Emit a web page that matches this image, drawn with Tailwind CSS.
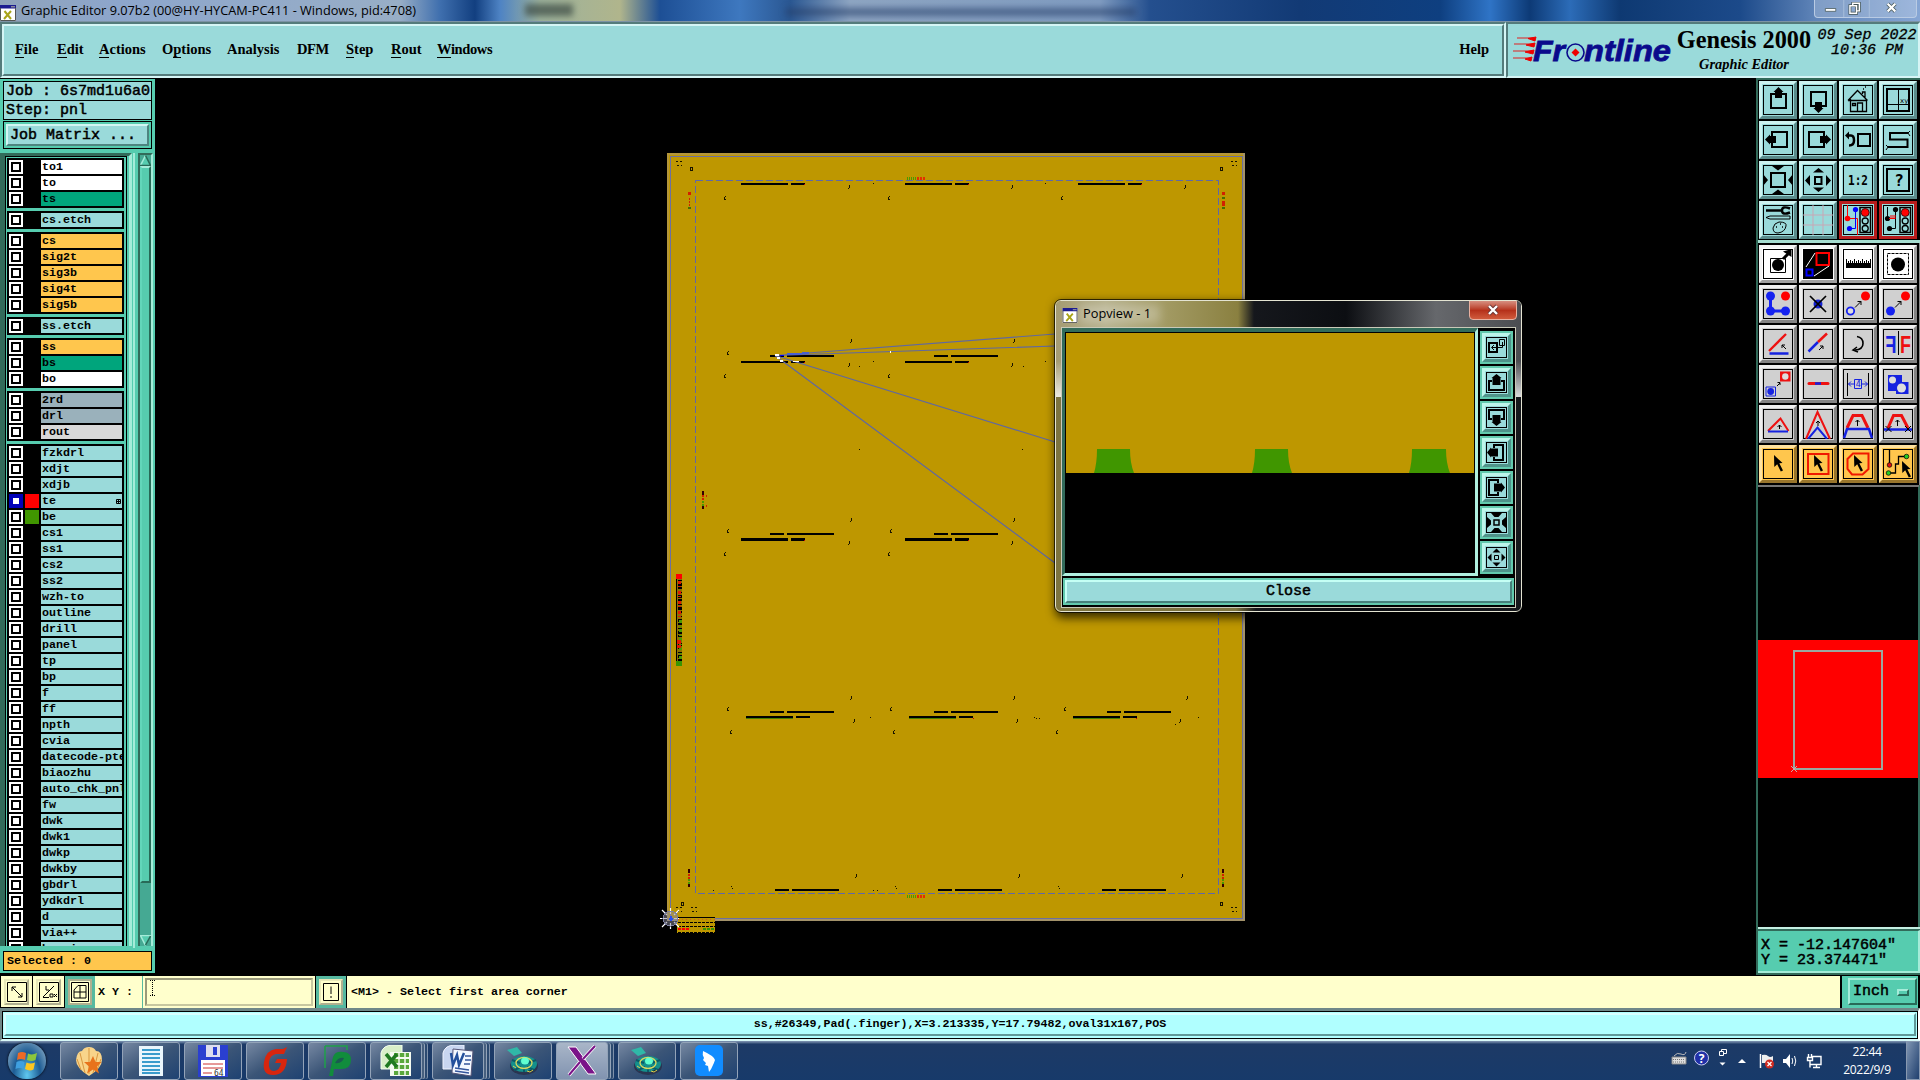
<!DOCTYPE html>
<html lang="en">
<head>
  <meta charset="UTF-8" />
  <meta name="viewport" content="width=device-width, initial-scale=1.0"/>
  <title>Graphic Editor 9.07b2</title>
  <script src="https://cdn.jsdelivr.net/npm/@tailwindcss/browser@4"></script>
</head>
<body class="bg-black w-[1920px] h-[1080px] overflow-hidden flex flex-col relative text-black font-['Liberation_Mono',monospace]">

  <!-- Shared icons, 30x30 -->
  <svg class="hidden">
    <defs>
      <symbol id="up" viewBox="0 0 30 30"><path d="M12 9H8v14h15V9h-4" fill="none" stroke="#000" stroke-width="2"/><path d="M15.500 2l5 5h-1.500v6h-7V7h-1.500z"/></symbol>
      <symbol id="down" viewBox="0 0 30 30"><path d="M12 21H8V7h15v14h-4" fill="none" stroke="#000" stroke-width="2"/><path d="M15.500 28l5-5h-1.500v-6h-7v6h-1.500z"/></symbol>
      <symbol id="left" viewBox="0 0 30 30"><path d="M9 11V7h15v15H9v-4" fill="none" stroke="#000" stroke-width="2"/><path d="M2 14.500l5-5v1.500h6v7H7v1.500z"/></symbol>
      <symbol id="right" viewBox="0 0 30 30"><path d="M21 11V7H6v15h15v-4" fill="none" stroke="#000" stroke-width="2"/><path d="M28 14.500l-5-5v1.500h-6v7h6v1.500z"/></symbol>
      <symbol id="home" viewBox="0 0 30 30"><path d="M5 15.500L14.500 5.500l10 10M7.500 14v12.500h16V14M5 15.500h19M9.500 18.500h3v2h-3zM14.500 26v-8h5v8M19.500 9V7h2.500v6M20 4h1M22 2h1" fill="none" stroke="#000" stroke-width="1.300"/></symbol>
      <symbol id="xy" viewBox="0 0 30 30"><path d="M4 4h22v22H4z" fill="none" stroke="#000" stroke-width="2"/><path d="M15.500 4v22M4 19.500h22" stroke="#000"/><text x="17" y="18" font-size="7" font-family="DejaVu Sans">xy</text></symbol>
      <symbol id="undo" viewBox="0 0 30 30"><path d="M15 9h12v12H15z" fill="none" stroke="#000" stroke-width="2"/><path d="M4 10.500h4q3 0 3 5t-5 5" fill="none" stroke="#000" stroke-width="2.500"/><path d="M2 10.500l4-4v8z"/></symbol>
      <symbol id="snake" viewBox="0 0 30 30"><path d="M25 8H7v6.500h17.500V22H5" fill="none" stroke="#000" stroke-width="2"/><path d="M25 8l2-2M25 8l2 3M5 22l-2-2M5 22l-2 3" stroke="#000"/></symbol>
      <symbol id="zin" viewBox="0 0 30 30"><path d="M8 8h14v14H8z" fill="none" stroke="#000" stroke-width="2"/><path d="M9 1h12l-6 4.500zM9 29h12l-6-4.500zM0 9v12l5-6zM30 9v12l-5-6z"/></symbol>
      <symbol id="zout" viewBox="0 0 30 30"><path d="M12 12h6.500v7H12z" fill="none" stroke="#000" stroke-width="2"/><path d="M15.500 3l5.500 4.500H10zM15.500 27l5.500-4.500H10zM2 15.500L7 10v11zM28 15.500L23 10v11z"/></symbol>
      <symbol id="ratio" viewBox="0 0 30 30"><text x="15" y="20" text-anchor="middle" font-size="14" font-weight="bold" font-family="DejaVu Sans Mono" textLength="20" lengthAdjust="spacingAndGlyphs">1:2</text></symbol>
      <symbol id="ask" viewBox="0 0 30 30"><path d="M4 4h22v22H4z" fill="none" stroke="#000" stroke-width="2"/><text x="16" y="21" text-anchor="middle" font-size="16" font-weight="bold" font-family="DejaVu Sans Mono">?</text></symbol>
      <symbol id="tools" viewBox="0 0 30 30"><path d="M3 5.500h15" stroke="#000" stroke-width="2.500"/><path d="M27 3.500q-8-3-8 2t8 2" fill="none" stroke="#000" stroke-width="2.500"/><path d="M3 12.500l4-1.500h20v3H7z" fill="none" stroke="#000"/><path d="M10 23q1-5 6-6 8 0 7 4-1 6-8 7-5 0-5-5z" fill="none" stroke="#000"/><path d="M13 22h1M17 19h1M19 22h1" stroke="#000" stroke-width="1.500"/></symbol>
      <symbol id="grid" viewBox="0 0 30 30"><path d="M10 0v30M20 0v30M0 10h30M0 20h30" stroke="#c9a6b4"/></symbol>
      <symbol id="lamp" viewBox="0 0 30 30"><path d="M17 2.500h10.500v25H17z" fill="none" stroke="#000" stroke-width="1.500"/><circle cx="22.200" cy="7.500" r="4" fill="#f00" stroke="#000" stroke-width=".7"/><circle cx="22.200" cy="16" r="3" fill="none" stroke="#000" stroke-width="1.300"/><circle cx="22.200" cy="23.500" r="3" fill="none" stroke="#000" stroke-width="1.300"/></symbol>
      <symbol id="netcol" viewBox="0 0 30 30"><path d="M4.500 0v13.500h10V30" fill="none" stroke="#f00"/><path d="M12.500 5v18.500h-6" fill="none" stroke="#00f"/><circle cx="12.500" cy="4.500" r="2.600" fill="#00f"/><circle cx="6.500" cy="23.500" r="2.600" fill="#00f"/><circle cx="4.500" cy="13.500" r="2.800" fill="#f00"/><use href="#lamp" width="30" height="30"/></symbol>
      <symbol id="netblk" viewBox="0 0 30 30"><path d="M4.500 2v11.500M12.500 5v18.500h-6" fill="none" stroke="#000"/><circle cx="12.500" cy="4.500" r="2.600"/><circle cx="6.500" cy="23.500" r="2.600"/><circle cx="4.500" cy="13.500" r="2.600"/><path d="M6 13.500h6M8 10v4M10 10v4M12 10v4" stroke="#f00"/><use href="#lamp" width="30" height="30"/></symbol>

      <symbol id="move" viewBox="0 0 30 30"><path d="M7.500 9.500h15v14h-15z" fill="none" stroke="#000"/><circle cx="15" cy="16" r="6"/><path d="M20 10l5-5" stroke="#000" stroke-width="3"/><path d="M20 2.500L28.500 0v8z"/></symbol>
      <symbol id="pop" viewBox="0 0 30 30"><path d="M0 0h30v30H0z"/><path d="M13.500 4h12.500v12H13.500z" fill="none" stroke="#f00" stroke-width="2"/><path d="M3.500 20.500h6v6h-6z" fill="none" stroke="#00f" stroke-width="2"/><path d="M3 18l9-14M11 27l15-10" stroke="#fff"/></symbol>
      <symbol id="ruler" viewBox="0 0 30 30"><path d="M3 14h25v5H3z"/><path d="M3.500 10v5M5.500 12v3M7.500 11v4M9.500 12v3M11.500 10v5M13.500 12v3M15.500 11v4M17.500 12v3M19.500 10v5M21.500 12v3M23.500 11v4M25.500 12v3M27.500 10v5" stroke="#000"/></symbol>
      <symbol id="pick" viewBox="0 0 30 30"><path d="M4.500 4.500h21v21h-21z" fill="none" stroke="#000" stroke-dasharray="3 1"/><circle cx="15" cy="15.500" r="7"/></symbol>
      <symbol id="chain" viewBox="0 0 30 30"><path d="M7.500 7v15h15" fill="none" stroke="#1522f0" stroke-width="3"/><g fill="#1522f0"><circle cx="7.500" cy="7" r="4.500"/><circle cx="7.500" cy="22" r="4.500"/><circle cx="22.500" cy="22" r="4.500"/></g><circle cx="22.500" cy="7" r="4.500" fill="#f00"/></symbol>
      <symbol id="del" viewBox="0 0 30 30"><circle cx="15" cy="15" r="4.500" fill="#1522d0"/><path d="M7 7l16 16M23 7L7 23" stroke="#000" stroke-width="1.700"/></symbol>
      <symbol id="arr" viewBox="0 0 30 30"><path d="M12 18.500l6-6M14.500 12.500H18V16" fill="none" stroke="#000"/></symbol>
      <symbol id="cphollow" viewBox="0 0 30 30"><circle cx="7.500" cy="22" r="3.700" fill="#ddd" stroke="#1522f0" stroke-width="1.800"/><circle cx="22.500" cy="7" r="4.500" fill="#f00"/><use href="#arr" width="30" height="30"/></symbol>
      <symbol id="cpsolid" viewBox="0 0 30 30"><circle cx="7.500" cy="22" r="4.500" fill="#1522f0"/><circle cx="22.500" cy="7" r="4.500" fill="#f00"/><use href="#arr" width="30" height="30"/></symbol>
      <symbol id="angle" viewBox="0 0 30 30"><path d="M6 22L23 5" stroke="#e11" stroke-width="2.300"/><path d="M6.500 24.500h19" stroke="#1522e0" stroke-width="2.500"/><path d="M23 20l-4-4M19 19v-3h3" fill="none" stroke="#000"/></symbol>
      <symbol id="split" viewBox="0 0 30 30"><path d="M5.500 22.500L15 13" stroke="#1522e0" stroke-width="2.500"/><path d="M15 13l9-8.500" stroke="#e11" stroke-width="2.500"/><path d="M16 21l4-4M17 17h3v3" fill="none" stroke="#000"/></symbol>
      <symbol id="rot" viewBox="0 0 30 30"><path d="M14 7.500q6 1 6 7t-8 6.500" fill="none" stroke="#000" stroke-width="1.600"/><path d="M14 18l-4 3 5 2" fill="none" stroke="#000" stroke-width="1.500"/></symbol>
      <symbol id="mirror" viewBox="0 0 30 30"><path d="M15.500 2v24" stroke="#000"/><text x="17" y="24" font-size="23" textLength="11" lengthAdjust="spacingAndGlyphs" font-family="Liberation Sans" font-weight="bold" fill="#e11">F</text><text x="-13.500" y="24" font-size="23" textLength="11" lengthAdjust="spacingAndGlyphs" font-family="Liberation Sans" transform="scale(-1 1)" font-weight="bold" fill="#1522e0">F</text></symbol>
      <symbol id="swap" viewBox="0 0 30 30"><path d="M17 2.500h10.500v10H17z" fill="#e11"/><circle cx="22.300" cy="7.500" r="3.200" fill="#ddd"/><path d="M3 18h9.500v9H3z" fill="none" stroke="#1522e0"/><circle cx="7.700" cy="22.500" r="3.400" fill="#1522e0"/><path d="M14 17l3-3M14.500 13.500H17V16" fill="none" stroke="#000"/></symbol>
      <symbol id="seg" viewBox="0 0 30 30"><path d="M6 14.500h19" stroke="#e11" stroke-width="3" stroke-linecap="round"/><path d="M12 14.500h6" stroke="#1522e0" stroke-width="2.500"/></symbol>
      <symbol id="gap4" viewBox="0 0 30 30"><path d="M4.500 4v23M25.500 4v23" stroke="#000"/><path d="M11.500 10.500h7v9h-7zM5.500 15h6M8 12.500L5.500 15 8 17.500M18.500 15h6M22 12.500l2.500 2.500-2.500 2.500" fill="none" stroke="#1522e0"/><text x="12.800" y="18" font-size="8" font-family="DejaVu Sans" fill="#1522e0">4</text></symbol>
      <symbol id="bool" viewBox="0 0 30 30"><path d="M5 6h14v7h6.500v12H13v-3H5z" fill="#1522e0"/><circle cx="9.500" cy="11" r="3.500" fill="#ddd"/><circle cx="18.500" cy="19" r="4.500" fill="#ddd"/></symbol>
      <symbol id="tri" viewBox="0 0 30 30"><path d="M5 22L17.500 9.500l8 12.500" fill="none" stroke="#e11" stroke-width="2"/><path d="M5 22.500h20" stroke="#1522e0" stroke-width="2"/><path d="M16.500 20v-4M14.500 18l2-2 2 2" fill="none" stroke="#000"/></symbol>
      <symbol id="peak" viewBox="0 0 30 30"><path d="M3 30L14.500 3 27 30" fill="none" stroke="#e11" stroke-width="2"/><path d="M5 30l9.500-11.500L24 30" fill="none" stroke="#1522e0" stroke-width="2"/><path d="M15 17v-5M13 14l2-2 2 2" fill="none" stroke="#000"/></symbol>
      <symbol id="trap" viewBox="0 0 30 30"><path d="M4 19l6-12.500h9L25 19" fill="none" stroke="#e11" stroke-width="3"/><path d="M1 29l3-9h22l3 9" fill="none" stroke="#1522e0" stroke-width="2.500"/><path d="M14.500 17v-6M12.500 13l2-2 2 2" fill="none" stroke="#000"/></symbol>
      <symbol id="trapx" viewBox="0 0 30 30"><path d="M5 19l5.500-12.500h8L25 19" fill="none" stroke="#e11" stroke-width="3"/><path d="M1 20.500h28" stroke="#1522e0" stroke-width="2.500"/><path d="M14.500 17v-6M12.500 13l2-2 2 2M2.500 17l6 6M8.500 17l-6 6M22 17l6 6M28 17l-6 6" fill="none" stroke="#000"/></symbol>
      <symbol id="cur" viewBox="0 0 30 30"><path d="M11 6l8.500 8-3.200.3 3.700 7.200-2.200 1-3.600-7.200L11.300 18z"/></symbol>
      <symbol id="currect" viewBox="0 0 30 30"><path d="M5 5h20.500v20H5z" fill="none" stroke="#f01800" stroke-width="2"/><use href="#cur" width="30" height="30"/></symbol>
      <symbol id="curpoly" viewBox="0 0 30 30"><path d="M10 4.500h15.500V20l-6 5.500H9L4.500 20V10z" fill="none" stroke="#f01800" stroke-width="2"/><use href="#cur" width="30" height="30"/></symbol>
      <symbol id="curnet" viewBox="0 0 30 30"><path d="M6.500 0v16M6 24h6.500v-9h3V7.500h8" fill="none" stroke="#000" stroke-width="1.300"/><circle cx="6.500" cy="16" r="2.300" fill="#d11" stroke="#000" stroke-width=".7"/><circle cx="5.500" cy="24" r="2.300" fill="#2c2" stroke="#000" stroke-width=".7"/><circle cx="23.500" cy="7.500" r="2.300" fill="#2c2" stroke="#000" stroke-width=".7"/><use href="#cur" x="8" y="6" width="30" height="30"/></symbol>

      <!-- 21px versions for the popview -->
      <symbol id="p-src" viewBox="0 0 21 21"><path d="M3 6h8v9H3z" fill="none" stroke="#000" stroke-width="2"/><path d="M13.500 2.500h5v6h-5zM16.500 5v5.500H6M8 8l-2.500 2.500L8 13" fill="none" stroke="#000"/></symbol>
      <symbol id="p-up" viewBox="0 0 21 21"><path d="M6 9H3v9h15V9h-3" fill="none" stroke="#000" stroke-width="2"/><path d="M10.500 2l5 4h-1v7h-8V6h-1z"/></symbol>
      <symbol id="p-down" viewBox="0 0 21 21"><path d="M6 12H3V3h15v9h-3" fill="none" stroke="#000" stroke-width="2"/><path d="M10.500 19l5-4h-1V8h-8v7h-1z"/></symbol>
      <symbol id="p-left" viewBox="0 0 21 21"><path d="M8 6V3h9v15H8v-3" fill="none" stroke="#000" stroke-width="2"/><path d="M1 10.500l4-5v1h7v8H5v1z"/></symbol>
      <symbol id="p-right" viewBox="0 0 21 21"><path d="M12 6V3H3v15h9v-3" fill="none" stroke="#000" stroke-width="2"/><path d="M19 10.500l-4-5v1H8v8h7v1z"/></symbol>
      <symbol id="p-zin" viewBox="0 0 21 21"><path d="M8 8h5v5H8z" fill="none" stroke="#000" stroke-width="1.500"/><path d="M5 1h11l-3.500 4h-4zM5 20h11l-3.500-4h-4zM1 5v11l4-3.500v-4zM20 5v11l-4-3.500v-4z"/></symbol>
      <symbol id="p-zout" viewBox="0 0 21 21"><path d="M8.500 8.500h4v4h-4z" fill="none" stroke="#000"/><path d="M10.500 1.500l4 4h-8zM10.500 19.500l4-4h-8zM1.500 10.500l4-4v8zM19.500 10.500l-4-4v8z"/></symbol>

      <symbol id="xwin" viewBox="0 0 16 16"><path d="M0 0h16v16H0z" fill="#fff"/><path d="M0 0h16v3.500H0z" fill="#1c1c90"/><path d="M11 1h4v1.500h-4z" fill="#889"/><path d="M4.500 6l6.500 8M11 6l-7 8" stroke="#a9a41a" stroke-width="2"/><path d="M.5 3v12.500h15V3" fill="none" stroke="#555"/></symbol>
    </defs>
  </svg>

  <!-- Window title -->
  <div class="h-[22px] shrink-0 relative overflow-hidden flex items-center pb-[2px] border-b border-[#7d93a5] bg-[#164a8f]">
    <div class="absolute inset-0 bg-[linear-gradient(90deg,#8fa3ba_0px,#8da6cc_120px,#98aec6_400px,#3f6fae_440px,#123f80_475px,#4e83c4_500px,#9db29c_540px,#b0b58c_620px,#1d4f95_660px,#3e78bf_740px,#2a5792_790px,#8ea5c2_850px,#7f9bc0_1100px,#244f8e_1150px,#123a75_1300px,#0e3f80_1440px,#2f74c6_1490px,#0d3a76_1530px,#2c6cb8_1570px,#0e3972_1620px,#1c4a8a_1740px,#5f84b8_1815px,#86a6d4_1920px)]"></div>
    <div class="absolute left-[525px] top-1 w-[48px] h-3 bg-[#3c4a44]/70 blur-[3px]"></div>
    <div class="absolute left-[786px] top-[8px] w-[350px] h-2 bg-[#27406b]/60 blur-[3px]"></div>
    <svg class="relative w-4 h-4 mt-[6px]"><use href="#xwin"/></svg>
    <svg class="relative w-[400px] h-[20px] ml-[4px] font-['Open_Sans',sans-serif] text-[12px]"><text x="1" y="15" textLength="395" lengthAdjust="spacingAndGlyphs">Graphic Editor 9.07b2 (00@HY-HYCAM-PC411 - Windows, pid:4708)</text></svg>
    <div class="absolute right-[3px] top-0 h-[18px] w-[103px] flex border border-t-0 border-[#b9cbe4] rounded-b bg-white/20">
      <svg class="w-full h-full" viewBox="0 0 103 18"><path d="M28.500 0v18M55.500 0v18" stroke="#a9bfdc"/><path d="M9 9h11v3H9z" fill="#fff" stroke="#455" stroke-width=".8"/><path d="M35 6h7v8h-7z M38 6V3.500h7v8h-3" fill="none" stroke="#455" stroke-width="3"/><path d="M35 6h7v8h-7z M38 6V3.500h7v8h-3" fill="none" stroke="#fff" stroke-width="1.500"/><path d="M75 4l8 8M83 4l-8 8" stroke="#455" stroke-width="4"/><path d="M75 4l8 8M83 4l-8 8" stroke="#fff" stroke-width="2.400"/></svg>
    </div>
  </div>

  <!-- Menu bar -->
  <div class="h-[56px] shrink-0 flex bg-[#9adada] font-['Liberation_Serif',serif]">
    <div class="w-[1506px] border-2 border-t-[#547b7b] border-l-[#547b7b] border-r-[#d5f5f5] border-b-[#d5f5f5]">
      <div class="h-full border-2 border-t-[#d5f5f5] border-l-[#d5f5f5] border-r-[#547b7b] border-b-[#547b7b] flex items-center pl-[11px] pr-[13px] gap-[17px] text-[14.5px] font-bold whitespace-nowrap">
        <span class="w-[25px]"><span class="border-b border-black">F</span>ile</span>
        <span class="w-[25px]"><span class="border-b border-black">E</span>dit</span>
        <span class="w-[46px]"><span class="border-b border-black">A</span>ctions</span>
        <span class="w-[48px]">O<span class="border-b border-black">p</span>tions</span>
        <span class="w-[53px]">Analysis</span>
        <span class="w-[32px] tracking-tight">DFM</span>
        <span class="w-[28px]"><span class="border-b border-black">S</span>tep</span>
        <span class="w-[29px]"><span class="border-b border-black">R</span>out</span>
        <span class="tracking-tight"><span class="border-b border-black">W</span>indows</span>
        <span class="ml-auto">Help</span>
      </div>
    </div>
    <div class="flex-1 border-2 border-t-[#547b7b] border-l-[#547b7b] border-r-[#d5f5f5] border-b-[#d5f5f5] flex">
      <svg class="w-[166px] h-[52px]" viewBox="1508 24 166 52">
        <path d="M1517 38h17M1514 44h20M1513 51h20M1513 58h18" stroke="#e02020" stroke-width="1.200"/>
        <path d="M1528 38.500l8-1.500-1 4zM1526 45l9-2-1 4zM1525 52l9-2-1 4zM1525 59l7-2-1 4z" fill="#e00" stroke="#e00"/>
        <g font-family="Liberation Sans" font-weight="bold" font-style="italic" font-size="30" fill="#0a0a8c" stroke="#0a0a8c" stroke-width=".8">
          <text x="1533" y="60.500" textLength="32" lengthAdjust="spacingAndGlyphs">Fr</text>
          <text x="1584" y="60.500" textLength="87" lengthAdjust="spacingAndGlyphs">ntline</text>
        </g>
        <circle cx="1575.500" cy="52.500" r="8.500" fill="none" stroke="#0a0a8c" stroke-width="1.600"/>
        <path d="M1575.500 48.500l4 4-4 4-4-4z" fill="#e00"/>
      </svg>
      <div class="w-[140px] pt-px flex flex-col items-center whitespace-nowrap font-bold">
        <div class="text-[24.3px] leading-[29px]">Genesis 2000</div>
        <div class="text-[14.4px] leading-[20px] italic">Graphic Editor</div>
      </div>
      <div class="pt-[4px] ml-[3px] w-[100px] text-center font-['Liberation_Mono',monospace] italic [-webkit-text-stroke:0.3px_black] text-[15px] leading-[15px] whitespace-pre">09 Sep 2022
10:36 PM</div>
    </div>
  </div>

  <!-- Work area -->
  <div class="h-[897px] shrink-0 flex">
    <div class="w-[155px] flex flex-col bg-[#56ccaf] border-t border-black h-[895px]">
      <div class="mx-[3px] mt-[2px] h-[20px] shrink-0 border border-black bg-[#9adada] pl-[2px] text-[15px] leading-[19px] [-webkit-text-stroke:0.5px_black] whitespace-pre">Job : 6s7md1u6a0</div>
      <div class="mx-[3px] -mt-px h-[20px] shrink-0 border border-black bg-[#9adada] pl-[2px] text-[15px] leading-[19px] [-webkit-text-stroke:0.5px_black]">Step: pnl</div>
      <div class="mx-[3px] mt-[1px] h-[28px] shrink-0 border border-black p-[2px]">
        <div class="h-[22px] bg-[#9adada] border-2 border-t-[#d3f6f3] border-l-[#d3f6f3] border-r-[#4d8580] border-b-[#4d8580] pl-[2px] text-[15px] leading-[20px] [-webkit-text-stroke:0.5px_black]">Job Matrix ...</div>
      </div>
      <div class="mt-[4px] h-[795px] shrink-0 flex">
        <div class="w-[132px] h-[793px] bg-[#56ccaf] border-t-[3px] border-l-[5px] border-[#326b5a] border-r-[3px] border-r-[#a5ecd9]">
          <div class="w-[122px] h-[790px] border-t border-x border-black pt-px px-px flex flex-col gap-[3px] overflow-hidden" id="layers"></div>
        </div>
        <div class="w-[6px] border-l border-[#56ccaf] flex"><div class="w-[2px] bg-[#a5ecd9]"></div></div>
        <div class="w-[15px] h-[793px] flex flex-col border-l-2 border-t-2 border-[#326b5a] border-r-2 border-r-[#a5ecd9] bg-[#45a993]">
          <svg class="w-[11px] h-[11px] shrink-0"><path d="M.5 10.500L5.500 .5l5 10z" fill="#56ccaf"/><path d="M.5 10.500L5.500 .5" stroke="#a5ecd9" stroke-width="1.500"/><path d="M5.500 .5l5 10H0" fill="none" stroke="#286a58" stroke-width="1.500"/></svg>
          <div class="h-[717px] bg-[#56ccaf] border-t-2 border-l-2 border-[#a5ecd9] border-l-[#62d6ba] border-r-2 border-r-[#286a58] border-b-2 border-b-[#286a58]"></div>
          <svg class="w-[11px] h-[11px] mt-auto shrink-0"><path d="M.5 .5h10l-5 10z" fill="#56ccaf"/><path d="M0 .5h11M.5 .5l5 10" stroke="#a5ecd9" stroke-width="1.500" fill="none"/><path d="M10.500 1l-5 9" stroke="#286a58" stroke-width="1.500"/></svg>
        </div>
      </div>
      <div class="mx-[3px] mt-[3px] h-[20px] shrink-0 border border-black bg-[#ffc64d] pl-[3px] text-[11.67px] leading-[18px] font-bold">Selected : 0</div>
    </div>

    <svg class="w-[1601px] h-[897px]" viewBox="155 78 1601 897" shape-rendering="crispEdges">
      <path d="M667 153h578v768H667z" fill="#be9700"/>
      <path d="M668 921V154h577" fill="none" stroke="#b3953b" stroke-width="2"/>
      <path d="M1244 153v767H667" fill="none" stroke="#a3926a" stroke-width="2"/>
      <path d="M670.500 156.500h572v762h-572z" fill="none" stroke="#6c70a0"/>
      <path d="M695.500 180.500h523v713h-523z" fill="none" stroke="#5f68a8" stroke-dasharray="7 3"/>
      <!-- Coupon bars -->
      <g id="bars"></g>
      <g id="marks" stroke="#1a1400" fill="none"></g>
      <!-- Legends along the edges -->
      <g stroke-width="3" fill="none">
        <path d="M906.500 178.500h10" stroke="#4a9a00" stroke-dasharray="1 1"/><path d="M917 178.500h8" stroke="#e33000" stroke-dasharray="2 1"/>
        <path d="M906.500 896h10" stroke="#4a9a00" stroke-dasharray="1 1"/><path d="M917 896h8" stroke="#e33000" stroke-dasharray="2 1"/>
        <path d="M689.500 192v3M1223.500 192v3M1223.500 201v5" stroke="#d22000"/><path d="M689.500 198v8" stroke="#d22000" stroke-width="1" stroke-dasharray="2 1"/><path d="M688 207.500h3M1222 197.500h3M1222 207.500h3" stroke="#487000" stroke-width="2"/>
        <path d="M703 491v18M689 869v18M1223 869v18" stroke="#300" stroke-width="2" stroke-dasharray="4 11 3"/>
        <path d="M703 495v6M689 874v5M1223 874v5" stroke="#d22000" stroke-width="2" stroke-dasharray="2 1"/><path d="M703 501v6M689 879v5M1223 879v5" stroke="#4a9a00" stroke-width="2" stroke-dasharray="2 1"/>
        <path d="M706.500 495v2M706.500 505v2" stroke="#d22000" stroke-width="1"/>
      </g>
      <path d="M676 574h6v92h-6z" fill="#8a7000"/>
      <path d="M676.500 574v92" stroke="#000"/>
      <path d="M680 580v82" stroke="#000" stroke-width="4" stroke-dasharray="1 2 3 1 2 3"/>
      <path d="M679 581v40" stroke="#e01800" stroke-width="3" stroke-dasharray="3 2 1 4"/>
      <path d="M680 620v42" stroke="#4a9a00" stroke-width="3" stroke-dasharray="3 3 1 2"/>
      <path d="M679 640v4M679 645v3" stroke="#e01800" stroke-width="4"/>
      <path d="M676 574h6v5h-6z" fill="#f00"/><path d="M676 661h6v5h-6z" fill="#389400"/>
      <path d="M677 917h38v16h-38z" fill="#be9700"/>
      <path d="M678 917.500h37" stroke="#000"/>
      <path d="M678 922h37M678 926.500h37M678 932h37" stroke="#000" stroke-dasharray="3 1"/>
      <path d="M678 919.500h37" stroke="#d05030" stroke-dasharray="1 3"/>
      <path d="M678 929h12" stroke="#f00" stroke-width="2" stroke-dasharray="3 1"/><path d="M703 929h11" stroke="#389400" stroke-width="2" stroke-dasharray="3 1"/>
      <!-- Popview leaders -->
      <g stroke="#6068a0" shape-rendering="auto" stroke-width="1.200">
        <path d="M775 355.500L1055 334M775 355.500L1055 346M775 355.500L1055 442M775 355.500L1055 563"/>
      </g>
      <path d="M787 354.500l22-1.500" stroke="#4a60d0" stroke-width="2"/>
      <path d="M775 355h4M777 358h3M780 361h3M793 361.500h6M890 352h1" stroke="#fff" stroke-width="1.500"/>
      <path d="M780 355h4" stroke="#00f"/>
      <g stroke="#fff" shape-rendering="auto" stroke-width="1.200"><path d="M660 918.500h7M674 918.500h5M670.500 908v6M670.500 923v6M662 910l5 5M679 910l-5 5M662 927l5-5M679 927l-5-5"/></g>
      <circle cx="670.500" cy="918.500" r="7.500" fill="#889" fill-opacity=".5" stroke="#7c80a0"/>
      <path d="M669 918.500h4M670.500 916v5" stroke="#2a50f0" stroke-width="2"/>
    </svg>

    <!-- Tool palette -->
    <div class="w-[164px] flex flex-col bg-[#326b5a] pl-px pt-[2px] pr-px border-l border-[#326b5a]">
      <div class="bg-black grid grid-cols-[repeat(4,38px)] gap-[2px] py-px pl-px w-[162px] h-[160px]" id="tools1"></div>
      <div class="h-[3px] bg-[#a5ddd0] -mr-px"></div>
      <div class="bg-black grid grid-cols-[repeat(4,38px)] gap-[2px] py-[2px] pl-px w-[162px] h-[242px] border-r border-[#888]" id="tools2"></div>
      <div class="h-[2px] bg-[#777]"></div>
      <svg class="w-[160px] h-[440px] shrink-0" viewBox="0 0 160 440" shape-rendering="crispEdges">
        <path d="M0 0h160v440H0z"/>
        <path d="M0 153h160v138H0z" fill="#f00"/>
        <path d="M36 164h88v118H36z" fill="none" stroke="#9aa8a0" stroke-width="2"/>
        <path d="M33 279l6 6M39 279l-6 6" stroke="#caa"/>
      </svg>
      <div class="h-[2px] -mr-px bg-[#c5f0e3]"></div>
      <div class="h-[43px] shrink-0 -mr-px bg-[#56ccaf] border-t border-[#326b5a] border-b-2 border-b-[#a5ecd9] border-r-2 border-r-[#a5ecd9] mt-px pt-[7px] pl-[3px] [-webkit-text-stroke:0.5px_black] text-[15px] leading-[15px] whitespace-pre">X = -12.147604"
Y = 23.374471"</div>
    </div>
  </div>

  <!-- Prompt line -->
  <div class="h-[33px] shrink-0 flex pt-px pl-px">
    <div class="flex-1 h-[32px] bg-[#ffffcc] flex font-bold text-[11.67px]">
      <div class="w-[32px] border-r border-b border-black p-[3px]"><div class="h-[26px] border-2 border-[#e8e8b8] border-r-[#b0b090] border-b-[#b0b090] flex items-center justify-center"><svg class="w-[20px] h-[20px]"><path d="M.5 .5h19v19H.5zM5 5l10 10M5 9V5h4M15 11v4h-4" fill="none" stroke="#000"/></svg></div></div>
      <div class="w-[32px] border-r border-b border-black p-[3px]"><div class="h-[26px] border-2 border-[#e8e8b8] border-r-[#b0b090] border-b-[#b0b090] flex items-center justify-center"><svg class="w-[20px] h-[20px]"><path d="M.5 .5h19v19H.5zM4 15L15 4M4 15.500h6M7 4v4h3M11 12h3v3h-3zM15 12l3 3M18 12l-3 3" fill="none" stroke="#000"/></svg></div></div>
      <div class="w-[30px] bg-[#56b9a0] p-[3px]"><div class="h-[26px] bg-[#ffffcc] border-2 border-[#b0b090] flex items-center justify-center"><svg class="w-[18px] h-[20px]"><path d="M.5 .5h17v19H.5zM3 8l4-4.500h8V16H3zM3 10h12M9 3.500V16" fill="none" stroke="#000"/></svg></div></div>
      <div class="w-[48px] border-r border-[#56b9a0] pl-[3px] leading-[32px] whitespace-pre">X Y :</div>
      <div class="w-[172px] p-[2px]"><div class="h-[28px] border-2 border-[#99997a] border-r-[#c8c8a0] border-b-[#c8c8a0] pl-[3px]"><svg class="w-[5px] h-[16px]"><path d="M2.500 0v16M0 .5h5M0 15.500h5" stroke="#000" stroke-dasharray="1 1"/></svg></div></div>
      <div class="w-[32px] bg-[#56b9a0] border-x border-black p-[3px]"><div class="h-[26px] bg-[#ffffcc] border-2 border-[#e8e8b8] border-r-[#b0b090] border-b-[#b0b090] flex items-center justify-center"><svg class="w-[16px] h-[18px]"><path d="M.5 .5h15v17H.5zM8 3.500v7.500M8 13v2" fill="none" stroke="#000"/></svg></div></div>
      <div class="pl-[4px] leading-[32px] whitespace-pre">&lt;M1&gt; - Select first area corner</div>
    </div>
    <div class="w-[80px] h-[32px] border-l-2 border-r-2 border-black bg-[#56ccaf] p-[2px] pl-[6px]">
      <div class="h-[27px] w-[69px] border-2 border-t-[#a5ecd9] border-l-[#a5ecd9] border-r-[#286a58] border-b-[#286a58] flex items-center pt-[2px] pl-[3px] text-[15px] [-webkit-text-stroke:0.5px_black]">Inch<div class="ml-[8px] w-[12px] h-[7px] border-2 border-t-[#a5ecd9] border-l-[#a5ecd9] border-r-[#286a58] border-b-[#286a58]"></div></div>
    </div>
  </div>

  <!-- Status line -->
  <div class="h-[33px] shrink-0 border-t-[3px] border-l-2 border-[#708888] border-b-2 border-b-[#d8f8f8] border-r-2 border-r-white">
    <div class="h-full border border-black bg-[#b0ffff] p-px pb-[2px]">
      <div class="h-full border-2 border-t-[#d8ffff] border-l-[#d8ffff] border-r-[#5f9999] border-b-[#5f9999] flex items-center justify-center font-bold text-[11.67px]">ss,#26349,Pad(.finger),X=3.213335,Y=17.79482,oval31x167,POS</div>
    </div>
  </div>

  <!-- Taskbar -->
  <div class="h-[39px] shrink-0 relative bg-linear-to-b from-[#7389a8] from-[2%] via-[#1d3a66] via-[8%] to-[#173a6a] flex items-center pl-[8px] font-['Open_Sans',sans-serif] text-white">
    <div class="w-[38px] h-[36px] rounded-full shadow-[0_0_3px_#000] bg-radial-[at_50%_90%] from-[#5fc8f0] via-[#1d5c94] to-[#a0bcd0] flex items-center justify-center">
      <svg class="w-6 h-6" viewBox="0 0 24 24"><path d="M3 4q4-2 8 0l-1 7q-4-2-8 0z" fill="#ec6a26"/><path d="M13 4.500q4 2 9-.5l-1.500 7q-4 2-8.500 0z" fill="#8cc63c"/><path d="M1.500 13q4-2 8 0l-1 7q-4-2-8 0z" fill="#3fa0e0"/><path d="M11.500 13.500q4 2 8.500 0l-1.500 7q-4 2-8.500-.5z" fill="#fcc620"/></svg>
    </div>
    <div class="ml-[14px] flex gap-[4px]" id="tasks"></div>
    <svg class="absolute left-[1668px] top-0 w-[160px] h-[39px]" viewBox="1668 1041 160 39">
      <path d="M1672 1057h14v7h-14z" fill="#ddd" stroke="#888"/><path d="M1673 1059.500h12M1673 1062h12" stroke="#777" stroke-dasharray="1 1"/><path d="M1674 1056q3-4 7-2t5-2" fill="none" stroke="#bbb"/>
      <circle cx="1701.500" cy="1058" r="7" fill="#2030a8" stroke="#c8ccf0"/><text x="1701.500" y="1062.500" font-size="12" font-weight="bold" fill="#fff" text-anchor="middle">?</text>
      <path d="M1719.500 1051.500h4v4h-4zM1721.500 1051v-1.500h5v4h-3" fill="none" stroke="#fff"/><path d="M1719.500 1062.500h6l-3 3z" fill="#fff"/><path d="M1738 1063l4-4 4 4z" fill="#fff"/>
      <path d="M1760.500 1054v14" stroke="#fff" stroke-width="1.500"/><path d="M1762 1055q4-1 6 1t5 0v7h-11z" fill="#eee"/><circle cx="1769.500" cy="1064" r="4.500" fill="#d02a20"/><path d="M1767.500 1062l4 4M1771.500 1062l-4 4" stroke="#fff" stroke-width="1.300"/>
      <path d="M1783 1059h3l4-5v14l-4-5h-3z" fill="#fff"/><path d="M1792 1058q1.500 3 0 6M1794.500 1056q2.500 5 0 10" fill="none" stroke="#fff"/>
      <path d="M1811 1056.500h10v8H1810M1813 1067.500h7M1816.500 1065v2M1808.500 1054v3M1811.500 1054v3M1807.500 1057.500h5v3h-5zM1810 1061v6.500" fill="none" stroke="#fff" stroke-width="1.400"/>
    </svg>
    <div class="absolute right-[23px] top-[2px] w-[60px] text-center text-[12px] leading-[18px] tracking-[-0.3px] whitespace-nowrap">22:44<br>2022/9/9</div>
    <div class="absolute right-0 top-0 w-[14px] h-[39px] border border-[#8798b0] bg-linear-to-br from-[#8095b2] to-[#20406e]"></div>
  </div>

  <!-- Popview window -->
  <div class="absolute left-[1055px] top-[300px] w-[467px] h-[312px] rounded-[6px] border border-[#e4e4d2] outline outline-black/70 shadow-[2px_4px_10px_2px_rgba(0,0,0,0.7)] flex flex-col pl-[5px] pr-[5px] pb-[3px] bg-[linear-gradient(90deg,#7d7440_0px,#7d7440_180px,#15171b_200px,#0c0e12_320px,#16181c_468px)] overflow-hidden">
    <div class="absolute inset-x-0 top-0 h-[96px] bg-[linear-gradient(90deg,#a59c73_0px,#b5b08c_50px,#a29a63_110px,#8a8040_182px,#15171c_198px,#0c0e12_290px,#66686c_380px,#4a4c50_468px)]"></div>
    <div class="absolute left-0 top-[60px] w-[5px] h-[36px] bg-linear-to-b from-transparent to-white/80"></div>
    <div class="absolute right-0 top-[60px] w-[5px] h-[36px] bg-linear-to-b from-transparent to-white/80"></div>
    <div class="absolute left-[24px] top-[4px] w-[80px] h-[18px] bg-white/25 blur-[5px]"></div>
    <div class="relative h-[26px] shrink-0 flex items-center pl-px">
      <svg class="w-4 h-[15px] mt-[3px]"><use href="#xwin"/></svg>
      <svg class="w-[100px] h-5 ml-[4px] font-['Open_Sans',sans-serif] text-[12px]"><text x="1" y="14" textLength="68" lengthAdjust="spacingAndGlyphs">Popview - 1</text></svg>
      <div class="absolute -right-px -top-px w-[48px] h-[20px] rounded-b-[4px] border border-[#e8b0a0] bg-linear-to-b from-[#d68e80] via-[#b5301a] via-[52%] to-[#d05a3c] flex items-center justify-center">
        <svg class="w-3 h-3" viewBox="0 0 12 12"><path d="M2 2l8 8M10 2l-8 8" stroke="#633" stroke-width="4"/><path d="M2 2l8 8M10 2l-8 8" stroke="#fff" stroke-width="2.400"/></svg>
      </div>
    </div>
    <div class="relative flex-1 border border-[#c9c9b8] bg-black flex flex-col">
      <div class="h-[248px] flex">
        <div class="w-[416px] border-l-[3px] border-t-[4px] border-[#326b5a] border-r-[3px] border-r-[#b0f0e0] border-b-[3px] border-b-[#b0f0e0]">
          <svg class="w-[410px] h-[241px]" viewBox="0 0 410 241"><path d="M0 0h410v241H0z"/><path d="M1 1h408v140H1z" fill="#be9700"/><path d="M32 117h33q0 14 4 24H29q3-10 3-24zM190 117h33q0 14 4 24h-40q3-10 3-24zM347 117h34q0 14 4 24h-41q3-10 3-24z" fill="#409600"/></svg>
        </div>
        <div class="pl-[2px] pt-[3px] flex flex-col gap-[2px]" id="poptools"></div>
      </div>
      <div class="mt-[2px] h-[27px] w-[451px] ml-px bg-[#62c9ad] p-[2px]">
        <div class="h-full bg-[#9adada] border-2 border-t-[#c5fff5] border-l-[#c5fff5] border-r-[#47807b] border-b-[#47807b] text-center [-webkit-text-stroke:0.5px_black] text-[15px] leading-[20px]">Close</div>
      </div>
    </div>
  </div>

  <script>
    const cyan = 'bg-[#9adada]', white = 'bg-white', green = 'bg-[#00a57c]', gold = 'bg-[#ffc64d]', slate = 'bg-[#9ab1bb]', grey = 'bg-[#d8d8d8]';
    const groups = [
      [['to1', white], ['to', white], ['ts', green]],
      [['cs.etch', cyan]],
      [['cs', gold], ['sig2t', gold], ['sig3b', gold], ['sig4t', gold], ['sig5b', gold]],
      [['ss.etch', cyan]],
      [['ss', gold], ['bs', green], ['bo', white]],
      [['2rd', slate], ['drl', slate], ['rout', grey]],
      ['fzkdrl', 'xdjt', 'xdjb', 'te', 'be', 'cs1', 'ss1', 'cs2', 'ss2', 'wzh-to', 'outline', 'drill', 'panel', 'tp', 'bp', 'f', 'ff', 'npth', 'cvia', 'datecode-pte', 'biaozhu', 'auto_chk_pnl', 'fw', 'dwk', 'dwk1', 'dwkp', 'dwkby', 'gbdrl', 'ydkdrl', 'd', 'via++', 'hanxin'].map(n => [n, cyan]),
    ];
    const swatch = { te: 'bg-[#ff0000]', be: 'bg-[#409600]' };
    document.getElementById('layers').innerHTML = groups.map(g => `
      <div class="w-[117px] shrink-0 bg-black p-[2px] flex flex-col gap-[2px]">${g.map(([name, bg]) => `
        <div class="flex gap-[2px] h-[14px]">
          <div class="w-[14px] h-[14px] p-[2px] ${name === 'te' ? 'bg-[#0000b8]' : 'bg-white'}"><div class="w-[10px] h-[10px] border-2 bg-white ${name === 'te' ? 'border-[#0000b8]' : 'border-black'}"></div></div>
          <div class="w-[14px] h-[14px] ${swatch[name] || 'bg-black'}"></div>
          <div class="w-[81px] h-[14px] pl-px overflow-hidden whitespace-nowrap text-[11.67px] leading-[15px] font-bold flex ${bg}">${name}${name === 'te' ? '<svg class="w-[5px] h-[5px] ml-auto mr-[1px] mt-[5px]"><path d="M.5 .5h4v4h-4zM2.500 0v5M0 2.500h5" fill="none" stroke="#000"/></svg>' : ''}</div>
        </div>`).join('')}
      </div>`).join('');

    const skins = {
      c: 'bg-[#9adada] border-t-[#cdf2f0] border-l-[#cdf2f0] border-r-[#5b8b8b] border-b-[#5b8b8b]',
      r: 'bg-[#9adada] border-[#b81c1c]',
      w: 'bg-white border-t-[#f4f4f4] border-l-[#f4f4f4] border-r-[#a0a0a0] border-b-[#a0a0a0]',
      g: 'bg-[#d0d0d0] border-t-[#efefef] border-l-[#efefef] border-r-[#838383] border-b-[#838383]',
      o: 'bg-[#ffc64d] border-t-[#ffe2a0] border-l-[#ffe2a0] border-r-[#99752c] border-b-[#99752c]',
    };
    const cell = ([icon, skin]) => `<div class="w-[38px] h-[38px] border-[3px] p-px ${skins[skin]}"><div class="w-[30px] h-[30px] border border-black"><svg class="w-[30px] h-[30px] -m-px"><use href="#${icon}"/></svg></div></div>`;
    document.getElementById('tools1').innerHTML = [
      ...['up', 'down', 'home', 'xy', 'left', 'right', 'undo', 'snake', 'zin', 'zout', 'ratio', 'ask', 'tools', 'grid'].map(i => [i, 'c']),
      ['netcol', 'r'], ['netblk', 'r'],
    ].map(cell).join('');
    document.getElementById('tools2').innerHTML = [
      ...['move', 'pop', 'ruler', 'pick'].map(i => [i, 'w']),
      ...['chain', 'del', 'cphollow', 'cpsolid', 'angle', 'split', 'rot', 'mirror', 'swap', 'seg', 'gap4', 'bool', 'tri', 'peak', 'trap', 'trapx'].map(i => [i, 'g']),
      ...['cur', 'currect', 'curpoly', 'curnet'].map(i => [i, 'o']),
    ].map(cell).join('');
    document.getElementById('poptools').innerHTML = ['src', 'up', 'down', 'left', 'right', 'zin', 'zout'].map(i =>
      `<div class="w-[33px] h-[33px] bg-[#62c9ad] p-[2px]"><div class="h-[29px] border-[3px] bg-[#9adada] border-t-[#bdf5ea] border-l-[#bdf5ea] border-r-[#4f938a] border-b-[#4f938a] p-px"><div class="w-[21px] h-[21px] border border-black"><svg class="w-[21px] h-[21px] -m-px"><use href="#p-${i}"/></svg></div></div></div>`).join('');

    // x, y, width, height
    const bars = [];
    [741, 905, 1078].forEach(x => bars.push([x, 183, 47, 2], [x + 50, 183, 14, 2]));
    [355, 533, 711].forEach(y => [770, 934].forEach(x => bars.push([x, y, 14, 2], [x + 17, y, 47, 2])));
    bars.push([1107, 711, 14, 2], [1124, 711, 47, 2]);
    [741, 905].forEach(x => bars.push([x, 361, 47, 2], [x + 50, 361, 14, 2], [x, 538, 47, 3], [x + 50, 538, 14, 3]));
    [746, 909, 1073].forEach(x => bars.push([x, 716, 47, 2], [x + 50, 716, 14, 2]));
    [775, 938, 1102].forEach(x => bars.push([x, 889, 14, 2], [x + 17, 889, 47, 2]));
    document.getElementById('bars').innerHTML = bars.map(([x, y, w, h]) => `<rect x="${x}" y="${y}" width="${w}" height="${h}"/>`).join('')
      + [746, 909, 1073].map(x => `<rect x="${x}" y="718" width="47" height="1" fill="#4a8000"/>`).join('')
      + [[804, 184], [968, 184], [1141, 184], [804, 362], [968, 362], [804, 540], [968, 540], [973, 718], [1136, 718]].map(([x, y]) => `<rect x="${x}" y="${y}" width="1" height="1" fill="#c00"/>`).join('');

    const open = [[724, 198], [888, 198], [1061, 198], [727, 353], [724, 376], [888, 376], [727, 531], [890, 531], [724, 554], [888, 554], [727, 709], [890, 709], [1064, 709], [730, 732], [893, 732], [1056, 732]];
    const shut = [[849, 187], [1012, 187], [1185, 187], [851, 341], [1014, 341], [849, 365], [1012, 365], [851, 520], [1014, 520], [849, 543], [1012, 543], [851, 698], [1014, 698], [1187, 698], [854, 721], [1017, 721], [1180, 721], [856, 876], [1019, 876], [1182, 876]];
    const dots = [[873, 183], [1045, 183], [859, 366], [873, 361], [1023, 366], [1045, 361], [859, 449], [1022, 449], [870, 717], [1034, 717], [1036, 718], [1039, 718], [1175, 724], [1198, 717], [713, 890], [731, 886], [732, 888], [873, 890], [877, 890], [895, 886], [896, 888], [1058, 886], [1059, 888]];
    const pads = [[679, 164], [1234, 164], [679, 910], [694, 910], [1234, 910]];
    const hooks = [[691, 169], [1221, 169], [682, 904], [1221, 904]];
    document.getElementById('marks').innerHTML =
      open.map(([x, y]) => `<path d="M${x + 1} ${y - 1.5}h1M${x + .5} ${y - 1}v3M${x + 1} ${y + 1.5}h1"/>`).join('') +
      shut.map(([x, y]) => `<path d="M${x + .5} ${y - 2}v3M${x - 1} ${y + 1.5}h1"/>`).join('') +
      dots.map(([x, y]) => `<path d="M${x} ${y + .5}h1"/>`).join('') +
      pads.map(([x, y]) => `<path d="M${x - 3} ${y - 2.5}h6M${x - 2} ${y + 1.5}h5" stroke-dasharray="2 2"/>`).join('') +
      hooks.map(([x, y]) => `<path d="M${x - .5} ${y + 1.5}v-3h2v3z"/>`).join('');

    // Taskbar buttons
    const tasks = [
      '<path d="M16 31q-13-8-13-16 1-9 6-9 2-4 7-4t7 4q6 0 6 9 0 8-13 16z" fill="#f8d48a"/><path d="M16 29V3M12 28L7 8M20 28l5-20M8 25L4 14M24 25l4-11" stroke="#d9973f"/><path d="M20 11l2.500 6h6l-4.500 4.500 2 7-6-4-6 4 2-7-5-4.500h6z" fill="#e8731c"/>',
      '<path d="M4 1h24v30H4z" fill="#eaf6fc"/><path d="M7 5h18M7 9h18M7 13h18M7 17h18M7 21h18M7 25h18M7 28h18" stroke="#3a9ccc" stroke-width="2"/>',
      '<path d="M1 0h30v32H1z" fill="#2a3fd0"/><path d="M9 0h14v12H9z" fill="#dde"/><path d="M16 2h4v8h-4z" fill="#2a3fd0"/><path d="M4 15h24v16H4z" fill="#fff"/><path d="M6 19h20M6 23h20M6 28h9" stroke="#c33"/><text x="17" y="31" font-size="8" font-family="DejaVu Sans Mono" fill="#333">64</text>',
      '<path d="M28 2l-3 7h-8q-6 1-7 8-1 9 5 9 6-1 7-8h-6l2-4h10q-1 16-14 16-11 0-9-13Q7 5 17 4h7z" fill="#d8260e"/>',
      '<path d="M4 1h22v4M4 1v22" fill="none" stroke="#1fa04a" stroke-width="1.500"/><path d="M8 31L12 12q2-6 10-5 8 0 8 8 0 9-10 9h-7l-1 7z" fill="#118c3c"/><path d="M14 18q3-6 9-5-2 6-9 5z" fill="#1a5a50"/>',
      '<path d="M1 8q2-8 12-8h9v24H1z" fill="#d8efc8" stroke="#f4fff0"/><path d="M10 7h21v24H10z" fill="#f4faf0"/><path d="M14 10h15M14 16h15M14 22h15M14 28h15" stroke="#5aa83c" stroke-width="4"/><path d="M19 8v23M25 8v23" stroke="#f4faf0" stroke-width="1.500"/><path d="M6 9l11 13M17 9L6 22" stroke="#1f7a20" stroke-width="3.500"/>',
      '<path d="M1 8q2-8 12-8h9v24H1z" fill="#c8d6f0" stroke="#f0f4ff"/><path d="M11 4l20 2-2 25-19-3z" fill="#f4f8ff" stroke="#557"/><path d="M23 11h6M23 15h6M22 19h6M13 23l14 2M13 26l14 2" stroke="#35569c" stroke-width="1.500"/><path d="M9 8l2 12 4-10 2 10 5-12" fill="none" stroke="#24509c" stroke-width="2.500"/>',
      '', '', '',
      '<rect x="2" y="0" width="28" height="31" rx="5" fill="#118cff"/><path d="M10 6q11 5 12 9-1 3-2 5-2 5-4 7l-1-6-3-1 1-2-3-3 1-2q-2-3-1-7z" fill="#fff"/>',
    ];
    const gem = '<ellipse cx="17" cy="21" rx="14" ry="9" fill="#2a3550"/><ellipse cx="17" cy="19" rx="13" ry="8" fill="#14908c"/><path d="M5 15l8 3M29 15l-8 3M7 25l7-3M27 25l-7-3M17 27v-4" stroke="#0b5a68" stroke-width="2"/><ellipse cx="17" cy="18" rx="8" ry="5.500" fill="none" stroke="#d8d860" stroke-width="1.300"/><path d="M0 5l10-3 5 6-8 3z" fill="#30b8a8"/><ellipse cx="18" cy="16" rx="4" ry="3.500" fill="#60ffd0"/><path d="M20 26l3 1 3-2M6 21l3 2" stroke="#e0d050"/>';
    tasks[7] = tasks[9] = gem;
    tasks[8] = '<path d="M2 2h8l20 27h-8z" fill="#7a1488" stroke="#fff"/><path d="M29 1L17 14M14 17L3 30" stroke="#fff" stroke-width="3.500"/><path d="M29 1L17 14M14 17L3 30" stroke="#7a1488" stroke-width="2"/>';
    // Grouped windows show stacked edges on the right
    const stacked = i => [5, 6, 8].includes(i);
    document.getElementById('tasks').innerHTML = tasks.map((t, i) =>
      `<div class="h-[38px] rounded-[3px] border border-[#93a3b8] flex items-center justify-center ${i === 8 ? 'bg-linear-to-b from-[#a9b6c8] to-[#8193b0]' : 'bg-linear-to-br from-[#7688a2] via-[#3b5577] to-[#1e4272]'} ${stacked(i) ? 'w-[52px] mr-[6px] shadow-[3px_0_0_-1px_#47607f,4px_0_0_-1px_#93a3b8,6px_0_0_-1px_#2c4a70,7px_0_0_-1px_#7f91aa]' : 'w-[58px]'}"><svg class="w-[32px] h-[32px]" viewBox="0 0 32 32">${t}</svg></div>`).join('');
  </script>
</body>
</html>
